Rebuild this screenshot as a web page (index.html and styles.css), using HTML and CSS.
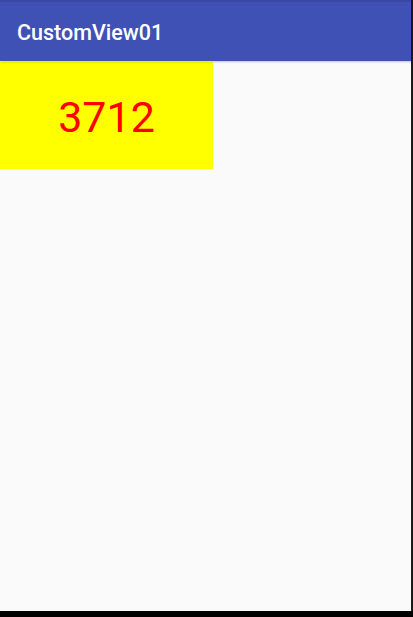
FILE: index.html
```html
<!DOCTYPE html>
<html>
<head>
<meta charset="utf-8">
<link rel="stylesheet" href="styles.css">
</head>
<body>
<div class="screen">
  <div class="main">
    <div class="statusline"></div>
    <header class="appbar"><span class="title">CustomView01</span></header>
    <div class="content">
      <div class="counter">3712</div>
    </div>
  </div>
  <div class="rightedge"></div>
</div>
<div class="bottombar"></div>
</body>
</html>
```
FILE: styles.css
```css
html, body {
  margin: 0;
  padding: 0;
  width: 413px;
  height: 617px;
  overflow: hidden;
  background: #fafafa;
  font-family: Roboto, "Noto Sans", sans-serif;
}
.screen {
  display: flex;
  height: 611px;
}
.main {
  flex: 1;
  display: flex;
  flex-direction: column;
  background: #fafafa;
}
.statusline {
  height: 2px;
  background: #3949a3;
}
.appbar {
  height: 59px;
  background: #3f51b5;
  display: flex;
  align-items: center;
  padding-left: 17px;
  box-shadow: 0 1px 2px rgba(0,0,0,0.22);
  position: relative;
  z-index: 1;
}
.title {
  color: #ffffff;
  font-size: 21.5px;
  font-weight: 500;
  margin-top: 1px;
}
.content {
  flex: 1;
  padding-top: 1px;
}
.counter {
  width: 213px;
  height: 107px;
  background: #ffff00;
  color: #ff0000;
  font-size: 43px;
  padding-top: 2px;
  box-sizing: border-box;
  display: flex;
  align-items: center;
  justify-content: center;
}
.rightedge {
  width: 2px;
  background: #1a1a1a;
}
.bottombar {
  height: 6px;
  background: #000;
}
```
